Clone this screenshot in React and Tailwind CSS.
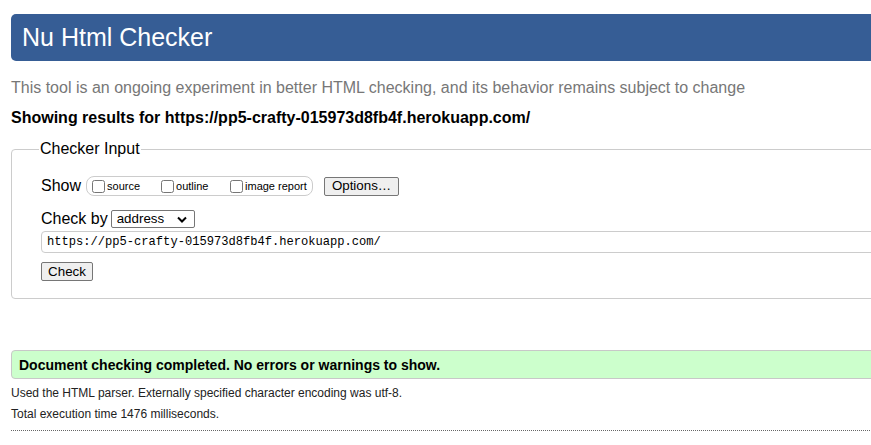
export default function App() {
  return (
    <div className="w-[871px] h-[445px] overflow-hidden bg-white font-['Liberation_Sans',Arial,sans-serif] text-black">
      <div className="w-[910px] pl-[11px]">
        <header className="mt-[14px] h-[47px] flex items-center pl-[11px] bg-[#365d95] rounded-l-[5px]">
          <h1 className="text-[25px] leading-none text-white">Nu Html Checker</h1>
        </header>

        <p className="mt-[18px] text-[16px] leading-[18px] text-[#777]">
          This tool is an ongoing experiment in better HTML checking, and its behavior remains subject to change
        </p>
        <p className="mt-[12px] text-[16px] leading-[18px] font-bold">
          Showing results for https://pp5-crafty-015973d8fb4f.herokuapp.com/
        </p>

        <fieldset className="mt-[13px] border border-[#ccc] rounded-[4px] pl-[27px] pr-[10px] pb-[17px]">
          <legend className="px-[1px] text-[16px] leading-[18px]">Checker Input</legend>

          <div className="mt-[18px] pl-[2px] flex items-center h-[20px]">
            <span className="text-[16px] leading-[18px]">Show</span>
            <div className="ml-[5px] h-[20px] w-[227px] flex items-center border border-[#ccc] rounded-[8px] pl-[5px] text-[11px]">
              <CheckItem label="source" w="w-[69px]" />
              <CheckItem label="outline" w="w-[69px]" />
              <CheckItem label="image report" />
            </div>
            <button className="ml-[11px] h-[19px] w-[75px] flex items-center justify-center bg-[#efefef] border border-[#767676] rounded-[2px] text-[13.33px] leading-none">
              Options…
            </button>
          </div>

          <div className="mt-[14px] pl-[2px] flex items-center h-[18px]">
            <span className="text-[16px] leading-[18px]">Check by</span>
            <div className="ml-[3px] h-[18px] w-[84px] flex items-center justify-between border border-[#767676] rounded-[2px] pl-[5px] pr-[7px] text-[13.33px] leading-none">
              <span>address</span>
              <svg width="10" height="7" viewBox="0 0 10 7">
                <path d="M1 1.5 L5 5.5 L9 1.5" fill="none" stroke="#000" strokeWidth="2" />
              </svg>
            </div>
          </div>

          <div className="mt-[3px] ml-[2px] h-[22px] flex items-center border border-[#ccc] rounded-[4px] pl-[5px] pt-[1px] font-['Liberation_Mono',monospace] text-[12.1px] leading-none">
            https://pp5-crafty-015973d8fb4f.herokuapp.com/
          </div>

          <button className="mt-[9px] ml-[2px] h-[19px] w-[52px] flex items-center justify-center bg-[#efefef] border border-[#767676] rounded-[2px] text-[13.33px] leading-none">
            Check
          </button>
        </fieldset>

        <div className="mt-[51px] h-[29px] flex items-center pl-[7px] bg-[#ccffcc] border border-[#c8c8c8] rounded-l-[4px] text-[14px] font-bold leading-none">
          Document checking completed. No errors or warnings to show.
        </div>
        <p className="mt-[5px] text-[12px] leading-[18px] text-[#222]">
          Used the HTML parser. Externally specified character encoding was utf-8.
        </p>
        <p className="mt-[3px] text-[12px] leading-[18px] text-[#222]">Total execution time 1476 milliseconds.</p>
        <div className="mt-[7px] border-t border-dotted border-[#666]" />
      </div>
    </div>
  );
}

function CheckItem({ label, w = "" }) {
  return (
    <label className={`flex items-center ${w}`}>
      <input type="checkbox" className="m-0 w-[13px] h-[13px]" />
      <span className="ml-[2px]">{label}</span>
    </label>
  );
}
